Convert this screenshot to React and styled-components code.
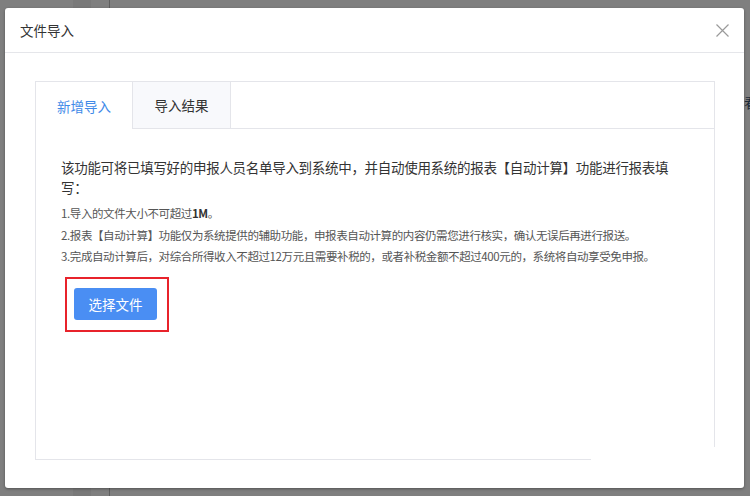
import React, { useState } from "react";
import styled, { createGlobalStyle } from "styled-components";

const GlobalStyle = createGlobalStyle`
  html, body {
    margin: 0;
    padding: 0;
    background-color: #7f7f7f;
    font-family: "Noto Sans CJK SC", "Noto Sans", "Liberation Sans", sans-serif;
  }
`;

const Page = styled.div`
  position: relative;
  width: 750px;
  height: 496px;
  overflow: hidden;
  display: flex;
  background-color: #7f7f7f;
`;

const Backdrop = styled.div`
  display: flex;
  flex: 1;
  padding-left: 73px;
`;

const Strip = styled.div`
  width: 18px;
  background-color: #797979;
`;

const Divider = styled.div`
  width: 1px;
  margin-left: 18px;
  background-color: #5e5e5e;
`;

const PeekText = styled.span`
  margin-left: auto;
  margin-top: 92px;
  margin-right: -8px;
  font-size: 14px;
  color: #1c2a3a;
`;

const Modal = styled.div`
  position: absolute;
  left: 5px;
  top: 8px;
  width: 739px;
  height: 480px;
  background-color: #fff;
  border-radius: 3px;
  box-shadow: 0 1px 3px rgba(0, 0, 0, 0.35);
  display: flex;
  flex-direction: column;
`;

const Header = styled.div`
  height: 44px;
  flex-shrink: 0;
  display: flex;
  align-items: center;
  justify-content: space-between;
  padding: 0 15px;
  border-bottom: 1px solid #e5e6ea;
`;

const Title = styled.h3`
  margin: 0;
  font-size: 13.5px;
  font-weight: normal;
  color: #333;
`;

const CloseButton = styled.button`
  border: 0;
  background: none;
  padding: 0;
  width: 14px;
  height: 14px;
  cursor: pointer;
  display: flex;
  align-items: center;
  justify-content: center;
`;

const Body = styled.div`
  flex: 1;
  padding: 28px 30px;
  display: flex;
  position: relative;
`;

const TabBox = styled.div`
  flex: 1;
  border: 1px solid #e4e5ea;
  display: flex;
  flex-direction: column;
`;

const TabBar = styled.div`
  display: flex;
  height: 46px;
  border-bottom: 1px solid #e4e5ea;
`;

const Tab = styled.div`
  width: ${p => (p.$active ? "96px" : "97px")};
  height: ${p => (p.$active ? "47px" : "46px")};
  display: flex;
  align-items: center;
  justify-content: center;
  font-size: 13.5px;
  color: ${p => (p.$active ? "#3f8ae8" : "#333")};
  background-color: ${p => (p.$active ? "#fff" : "#f8f9fc")};
  border-right: 1px solid #e4e5ea;
  cursor: pointer;
`;

const Content = styled.div`
  padding: 28px 25px 0 25px;
`;

const Intro = styled.p`
  margin: 0 0 6px;
  width: 628px;
  font-size: 13.5px;
  line-height: 20px;
  letter-spacing: -0.3px;
  color: #333;
`;

const List = styled.ol`
  margin: 0;
  padding: 0;
  list-style: none;
`;

const Item = styled.li`
  font-size: 11.5px;
  line-height: 21.5px;
  letter-spacing: -0.4px;
  color: #555;
  white-space: nowrap;

  b {
    color: #333;
  }
`;

const Highlight = styled.div`
  display: inline-block;
  margin: 9px 0 0 4px;
  padding: 9px 10px 10px 7px;
  border: 2px solid #e8232b;
`;

const PrimaryButton = styled.button`
  width: 83px;
  height: 32px;
  border: 0;
  border-radius: 3px;
  background-color: #4a8ef3;
  color: #fff;
  font-family: inherit;
  font-size: 13.5px;
  cursor: pointer;
`;

const Patch = styled.div`
  position: absolute;
  left: 586px;
  top: 394px;
  width: 135px;
  height: 24px;
  background-color: #fff;
`;

export default function App() {
  const [tab, setTab] = useState(0);
  return (
    <>
      <GlobalStyle />
      <Page>
        <Backdrop>
          <Strip />
          <Divider />
          <PeekText>看</PeekText>
        </Backdrop>
        <Modal>
          <Header>
            <Title>文件导入</Title>
            <CloseButton aria-label="close">
              <svg width="13" height="13" viewBox="0 0 13 13">
                <path d="M0.5 0.5L12.5 12.5M12.5 0.5L0.5 12.5" stroke="#9a9a9a" strokeWidth="1.2" fill="none" />
              </svg>
            </CloseButton>
          </Header>
          <Body>
            <TabBox>
              <TabBar>
                <Tab $active={tab === 0} onClick={() => setTab(0)}>新增导入</Tab>
                <Tab $active={tab === 1} onClick={() => setTab(1)}>导入结果</Tab>
              </TabBar>
              <Content>
                <Intro>
                  该功能可将已填写好的申报人员名单导入到系统中，并自动使用系统的报表【自动计算】功能进行报表填写：
                </Intro>
                <List>
                  <Item>1.导入的文件大小不可超过<b>1M</b>。</Item>
                  <Item>2.报表【自动计算】功能仅为系统提供的辅助功能，申报表自动计算的内容仍需您进行核实，确认无误后再进行报送。</Item>
                  <Item>3.完成自动计算后，对综合所得收入不超过12万元且需要补税的，或者补税金额不超过400元的，系统将自动享受免申报。</Item>
                </List>
                <Highlight>
                  <PrimaryButton>选择文件</PrimaryButton>
                </Highlight>
              </Content>
            </TabBox>
            <Patch />
          </Body>
        </Modal>
      </Page>
    </>
  );
}
